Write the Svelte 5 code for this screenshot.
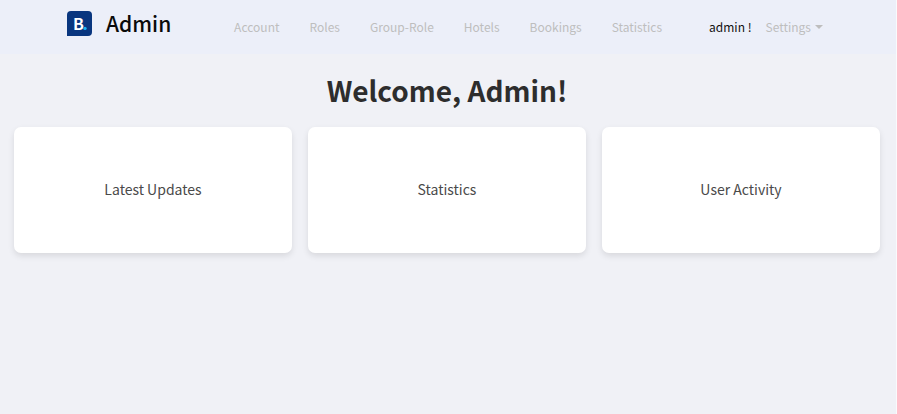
<script>
  const links = ['Account', 'Roles', 'Group-Role', 'Hotels', 'Bookings', 'Statistics'];
  const cards = ['Latest Updates', 'Statistics', 'User Activity'];
</script>

<div class="page">
  <header>
    <a class="brand" href="#home">
      <svg viewBox="0 0 25 25" width="25" height="25" aria-hidden="true">
        <path d="M4 0H21Q25 0 25 4V21Q25 25 21 25H0V4Q0 0 4 0Z" fill="#09367f" />
        <text x="6" y="19" class="letter">B</text>
        <circle cx="18" cy="17.4" r="1.7" fill="#18b4f5" />
      </svg>
      <span>Admin</span>
    </a>
    <nav>
      {#each links as link}
        <a href="#{link.toLowerCase()}">{link}</a>
      {/each}
    </nav>
    <div class="user">
      <span>admin !</span>
      <button type="button" aria-haspopup="true">Settings<i></i></button>
    </div>
  </header>

  <main>
    <h1>Welcome, Admin!</h1>
    <div class="cards">
      {#each cards as card}
        <section>{card}</section>
      {/each}
    </div>
  </main>
</div>

<style>
  :global(body) {
    margin: 0;
    background: #f0f1f6;
  }
  .page {
    box-sizing: border-box;
    min-height: 100vh;
    border-right: 1px solid #fafafc;
    font-family: "Noto Sans CJK SC", "Noto Sans", sans-serif;
    font-size: 12px;
    line-height: 18px;
  }
  header {
    display: flex;
    align-items: flex-start;
    box-sizing: border-box;
    height: 54px;
    padding: 0 73px 0 67px;
    background: #eceff9;
  }
  a {
    color: inherit;
    text-decoration: none;
  }
  .brand {
    display: flex;
    align-items: flex-start;
    gap: 14px;
    padding-top: 11px;
    color: #0a0a0a;
    font-size: 21px;
    font-weight: 500;
    line-height: 24px;
  }
  .letter {
    fill: #fff;
    font-family: "Liberation Sans Narrow", "Noto Sans CJK SC", sans-serif;
    font-size: 16px;
    font-weight: 700;
  }
  nav {
    display: flex;
    gap: 30px;
    margin: 18px 47px 0 auto;
    color: #bebebe;
  }
  .user {
    display: flex;
    gap: 14px;
    margin-top: 18px;
    color: #111;
  }
  button {
    display: flex;
    align-items: center;
    gap: 4px;
    padding: 0;
    border: 0;
    background: none;
    color: #bebebe;
    font: inherit;
  }
  i {
    border: 4px solid transparent;
    border-top-color: #bebebe;
    border-bottom: 0;
  }
  main {
    padding: 16px 16px 0 14px;
  }
  h1 {
    margin: 0 0 17px;
    color: #2d2d2d;
    font-size: 28px;
    font-weight: 700;
    line-height: 40px;
    text-align: center;
  }
  .cards {
    display: grid;
    grid-template-columns: repeat(3, 1fr);
    gap: 16px;
  }
  section {
    padding: 52px 16px 54px;
    border-radius: 7px;
    background: #fff;
    box-shadow: 0 3px 6px rgba(0, 0, 0, 0.1);
    color: #4a4a4a;
    font-size: 14px;
    line-height: 20px;
    text-align: center;
  }
</style>
